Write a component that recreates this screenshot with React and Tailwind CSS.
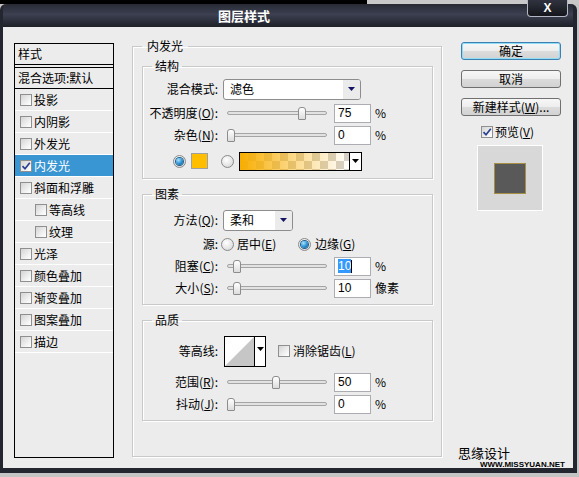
import React from 'react';

const Arrow = ({ color = '#141463' }) => (
  <svg width="7" height="4" viewBox="0 0 7 4" className="block">
    <path d="M0 0H7L3.5 4Z" fill={color} />
  </svg>
);

const Checkbox = ({ checked }) => (
  <span className="w-[12px] h-[12px] shrink-0 border border-[#8e8f8f] bg-[linear-gradient(135deg,#d4d4d4,#f4f4f4_70%,#ffffff)] flex items-center justify-center">
    {checked && (
      <svg width="10" height="10" viewBox="0 0 10 10" className="block">
        <path d="M1.5 5.2L4 7.8L8.8 1.8" fill="none" stroke="#2b3f8f" strokeWidth="1.7" />
      </svg>
    )}
  </span>
);

const Radio = ({ checked }) => (
  <span className="w-[13px] h-[13px] shrink-0 rounded-full border border-[#8a8a8a] bg-[radial-gradient(circle_at_40%_35%,#ffffff,#e4e4e4_60%,#c9c9c9)] flex items-center justify-center">
    {checked && (
      <span className="w-[7px] h-[7px] rounded-full bg-[radial-gradient(circle_at_35%_30%,#a8e4ff,#2a8fd0_55%,#0b4f82)] shadow-[0_0_0_1px_#1d5f8e]" />
    )}
  </span>
);

const Mn = ({ k }) => (
  <span>
    (<span className="underline">{k}</span>)
  </span>
);

const Label = ({ children }) => (
  <span className="w-[75px] shrink-0 text-right whitespace-nowrap">{children}</span>
);

const Slider = ({ left }) => (
  <div className="relative ml-[9px] w-[100px] h-[13px] shrink-0 flex items-center">
    <div className="w-full h-[4px] rounded-full border border-[#a4a4a4] bg-[#e2e2e2]" />
    <div
      className="absolute top-0 w-[8px] h-[13px] rounded-t-[3px] rounded-b-[1px] border border-[#8c8c8c] bg-[linear-gradient(#ffffff,#dcdcdc)]"
      style={{ left }}
    />
  </div>
);

const Input = ({ value, selected }) => (
  <div className="ml-[7px] w-[37px] h-[19px] shrink-0 border border-[#abadb3] bg-white flex items-center pl-[3px] font-['Liberation_Sans','Noto_Sans_CJK_SC',sans-serif] text-[12px]">
    {selected ? (
      <>
        <span className="bg-[#3399ff] text-white leading-[14px]">{value}</span>
        <span className="w-[1px] h-[13px] bg-black" />
      </>
    ) : (
      <span>{value}</span>
    )}
  </div>
);

const Select = ({ w, text }) => (
  <div className={'ml-[5px] h-[21px] shrink-0 flex items-center rounded-[3px] border border-[#8d8d8d] bg-white ' + w}>
    <span className="flex-1 pl-[6px]">{text}</span>
    <span className="w-[17px] h-full flex items-center justify-center bg-[#ebebeb] rounded-r-[2px]">
      <Arrow />
    </span>
  </div>
);

const Button = ({ children, primary }) => (
  <button
    className={
      'ml-[3px] w-[100px] h-[18px] rounded-[3px] border bg-[linear-gradient(#f7f7f7,#ededed_50%,#dcdcdc_50%,#d2d2d2)] text-[12px] leading-[16px] text-black ' +
      (primary ? 'border-[#3c7fb1] shadow-[inset_0_0_0_1px_#8fdcf7]' : 'border-[#707070]')
    }
  >
    {children}
  </button>
);

const items = [
  { name: '投影' },
  { name: '内阴影' },
  { name: '外发光' },
  { name: '内发光', checked: true, active: true },
  { name: '斜面和浮雕' },
  { name: '等高线', sub: true },
  { name: '纹理', sub: true },
  { name: '光泽' },
  { name: '颜色叠加' },
  { name: '渐变叠加' },
  { name: '图案叠加' },
  { name: '描边' },
];

const Group = ({ title, className, children }) => (
  <fieldset className={'border border-[#c9c9c9] shadow-[inset_1px_1px_0_#fff,1px_1px_0_#fff] ' + className}>
    <legend className="ml-[9px] px-[3px] leading-[16px]">{title}</legend>
    {children}
  </fieldset>
);

export default function App() {
  return (
    <div className="relative w-[579px] h-[477px] overflow-hidden bg-[#c4c4c4] font-['Noto_Sans_CJK_SC','Liberation_Sans',sans-serif] text-[12px] leading-[16px] text-black">
      <div className="flex h-[4px]">
        <div className="w-[367px] bg-black" />
        <div className="flex-1 bg-[#c8c8c8]" />
      </div>

      <div className="w-[577px] h-[469px] flex flex-col rounded-t-[6px] overflow-hidden border-l-[3px] border-r-[4px] border-b-[5px] border-[#23252f] bg-[#23252f]">
        <div className="h-[23px] shrink-0 flex items-center pl-[215px] bg-[linear-gradient(#6c7184,#41455523_0%,#3c4050_45%,#1e2028)]">
          <span className="text-white font-bold text-[13px]">图层样式</span>
        </div>

        <div className="flex-1 flex items-start pl-[11px] bg-[#ececec]">
          {/* style list */}
          <div className="mt-[16px] w-[100px] h-[415px] shrink-0 border border-black flex flex-col">
            <div className="h-[21px] border-b border-black pl-[3px] flex items-center">样式</div>
            <div className="mt-[2px] h-[22px] border-y border-black pl-[3px] flex items-center whitespace-nowrap">混合选项:默认</div>
            {items.map((it) => (
              <div
                key={it.name}
                className={
                  'h-[22px] border-b border-white flex items-center whitespace-nowrap ' +
                  (it.sub ? 'pl-[20px] ' : 'pl-[5px] ') +
                  (it.active ? 'bg-[#3a95d3] text-white' : '')
                }
              >
                <Checkbox checked={it.checked} />
                <span className="ml-[2px]">{it.name}</span>
              </div>
            ))}
          </div>

          {/* main settings */}
          <fieldset className="mt-[11px] ml-[18px] w-[310px] h-[419px] shrink-0 border border-[#c9c9c9] shadow-[inset_1px_1px_0_#fff,1px_1px_0_#fff] pl-[9px] pr-[8px]">
            <legend className="px-[5px] leading-[16px]">内发光</legend>

            <Group title="结构" className="mt-[4px] w-[291px] h-[121px] pt-[4px]">
              <div className="h-[22px] flex items-center">
                <Label>混合模式:</Label>
                <Select w="w-[138px]" text="滤色" />
              </div>
              <div className="mt-[2px] h-[22px] flex items-center">
                <Label>不透明度<Mn k="O" />:</Label>
                <Slider left={71} />
                <Input value="75" />
                <span className="ml-[4px]">%</span>
              </div>
              <div className="h-[22px] flex items-center">
                <Label>杂色<Mn k="N" />:</Label>
                <Slider left={0} />
                <Input value="0" />
                <span className="ml-[4px]">%</span>
              </div>
              <div className="mt-[4px] h-[22px] flex items-center pl-[30px]">
                <Radio checked />
                <span className="ml-[5px] w-[17px] h-[16px] border border-[#a0a0a0] bg-[#ffbf00]" />
                <span className="ml-[13px]"><Radio /></span>
                <div className="ml-[5px] w-[123px] h-[19px] border border-black flex">
                  <div className="flex-1 bg-[conic-gradient(#d5d1ca_25%,#ffffff_0_50%,#d5d1ca_0_75%,#ffffff_0)] bg-[length:16px_16px]">
                    <div className="h-full bg-[linear-gradient(to_right,#f8ae00,rgba(248,174,0,0.5)_45%,rgba(248,174,0,0))]" />
                  </div>
                  <div className="w-[12px] border-l border-black bg-white flex items-center justify-center">
                    <Arrow color="#000" />
                  </div>
                </div>
              </div>
            </Group>

            <Group title="图素" className="mt-[7px] w-[291px] h-[119px] pt-[7px]">
              <div className="h-[22px] flex items-center">
                <Label>方法<Mn k="Q" />:</Label>
                <Select w="w-[70px]" text="柔和" />
              </div>
              <div className="mt-[2px] h-[22px] flex items-center">
                <Label>源:</Label>
                <div className="ml-[3px] w-[77px] flex items-center">
                  <Radio />
                  <span className="ml-[3px]">居中<Mn k="E" /></span>
                </div>
                <Radio checked />
                <span className="ml-[4px]">边缘<Mn k="G" /></span>
              </div>
              <div className="h-[22px] flex items-center">
                <Label>阻塞<Mn k="C" />:</Label>
                <Slider left={6} />
                <Input value="10" selected />
                <span className="ml-[4px]">%</span>
              </div>
              <div className="h-[22px] flex items-center">
                <Label>大小<Mn k="S" />:</Label>
                <Slider left={6} />
                <Input value="10" />
                <span className="ml-[4px]">像素</span>
              </div>
            </Group>

            <Group title="品质" className="mt-[7px] w-[291px] h-[109px] pt-[7px]">
              <div className="h-[32px] flex items-center">
                <Label>等高线:</Label>
                <div className="ml-[6px] w-[42px] h-[31px] border border-black bg-white flex">
                  <svg width="29" height="29" viewBox="0 0 29 29" className="block">
                    <polygon points="0,29 29,0 29,29" fill="#c6c6c6" />
                  </svg>
                  <div className="flex-1 border-l border-black flex items-center justify-center pb-[4px]">
                    <Arrow color="#000" />
                  </div>
                </div>
                <span className="ml-[12px]"><Checkbox /></span>
                <span className="ml-[3px]">消除锯齿<Mn k="L" /></span>
              </div>
              <div className="mt-[4px] h-[22px] flex items-center">
                <Label>范围<Mn k="R" />:</Label>
                <Slider left={45} />
                <Input value="50" />
                <span className="ml-[4px]">%</span>
              </div>
              <div className="h-[22px] flex items-center">
                <Label>抖动<Mn k="J" />:</Label>
                <Slider left={0} />
                <Input value="0" />
                <span className="ml-[4px]">%</span>
              </div>
            </Group>
          </fieldset>

          {/* right column */}
          <div className="ml-[16px] w-[115px] self-stretch flex flex-col">
            <div className="mt-[15px]"><Button primary>确定</Button></div>
            <div className="mt-[10px]"><Button>取消</Button></div>
            <div className="mt-[10px]"><Button>新建样式<Mn k="W" />...</Button></div>
            <div className="mt-[9px] h-[14px] pl-[23px] flex items-center">
              <Checkbox checked />
              <span className="ml-[2px]">预览<Mn k="V" /></span>
            </div>
            <div className="mt-[6px] ml-[19px] w-[66px] h-[66px] border border-white bg-[#d8d8d8] flex items-center justify-center">
              <div className="w-[32px] h-[31px] bg-[#595959] border border-[#a68f45]" />
            </div>
            <div className="flex-1" />
            <div className="text-[13px] leading-[14px]">思缘设计</div>
            <div className="mt-[2px] ml-[22px] h-[6px] leading-[6px] text-[8px] font-bold font-['Liberation_Sans',sans-serif] whitespace-nowrap">
              WWW.MISSYUAN.NET
            </div>
          </div>
        </div>
      </div>

      <div className="absolute left-[527px] top-0 w-[41px] h-[17px] rounded-b-[4px] border-x border-b border-[#b4b8c4] bg-[linear-gradient(#30333f,#15161c)] flex items-center justify-center">
        <span className="text-white font-bold text-[12px] leading-[12px] font-['Liberation_Sans',sans-serif]">X</span>
      </div>
    </div>
  );
}
